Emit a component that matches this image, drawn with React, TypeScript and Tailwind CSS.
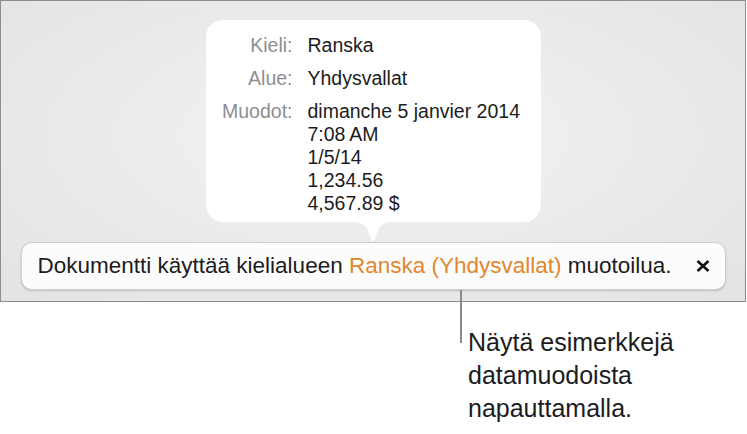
import React from 'react'

const FONT = { fontFamily: '"Liberation Sans", Arial, sans-serif' }

const ROWS: { label: string; values: string[] }[] = [
  { label: 'Kieli:', values: ['Ranska'] },
  { label: 'Alue:', values: ['Yhdysvallat'] },
  { label: 'Muodot:', values: ['dimanche 5 janvier 2014', '7:08\u2009AM', '1/5/14', '1,234.56', '4,567.89 $'] },
]

function Arrow() {
  return (
    <svg width="42" height="20" viewBox="0 0 42 20" className="block -mb-px">
      <path d="M0 0 C8 0 12 2 15 6 L19.5 18.5 Q21 20.5 22.5 18.5 L27 6 C30 2 34 0 42 0 Z" fill="#ffffff" />
    </svg>
  )
}

export default function App() {
  return (
    <div className="relative w-[747px] h-[434px] bg-white overflow-hidden text-[#1c1c1e]" style={FONT}>
      <div className="h-[302px] w-[746px] border-[1.5px] border-[#8d8d8f] bg-[radial-gradient(ellipse_at_50%_45%,#f4f4f6_0%,#ececee_45%,#e3e3e6_100%)] flex flex-col items-center">
        <div className="mt-[19px] w-[335px] h-[202px] bg-white rounded-[17px] pt-[14px]">
          <div className="grid grid-cols-[87px_1fr] gap-x-[15px] gap-y-[10px] text-[19.5px] leading-[23px]">
            {ROWS.map((r) => (
              <React.Fragment key={r.label}>
                <div className="text-right text-[#8e8e93] whitespace-nowrap">{r.label}</div>
                <div className="flex flex-col">
                  {r.values.map((v) => (
                    <span key={v} className="whitespace-nowrap">{v}</span>
                  ))}
                </div>
              </React.Fragment>
            ))}
          </div>
        </div>
        <Arrow />
        <div className="mt-px w-[705px] h-[48px] bg-[#fcfcfc] rounded-[11px] border border-[#cfcfd2] shadow-[0_1px_2px_rgba(0,0,0,0.18)] flex items-center justify-between pl-[16px] pr-[15px]">
          <span className="text-[22.5px] whitespace-nowrap">
            Dokumentti käyttää kielialueen <span className="text-[#e0872f]">Ranska (Yhdysvallat)</span> muotoilua.
          </span>
          <svg width="14" height="12" viewBox="0 0 14 12" className="block">
            <path d="M1.5 1 L12.5 11 M12.5 1 L1.5 11" stroke="#111" strokeWidth="2.7" />
          </svg>
        </div>
      </div>

      <div className="absolute left-[460px] top-[290px] w-[1.5px] h-[53px] bg-[#8a8a8c]" />

      <div className="ml-[468px] mt-[24px] text-[25px] leading-[33px] text-[#1c1c1e]">
        <div>Näytä esimerkkejä</div>
        <div>datamuodoista</div>
        <div>napauttamalla.</div>
      </div>
    </div>
  )
}
